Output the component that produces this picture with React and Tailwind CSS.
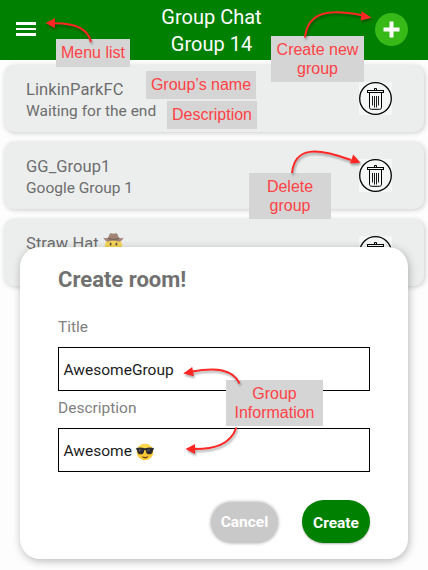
import React from 'react';

const rooms = [
  { name: 'LinkinParkFC', description: 'Waiting for the end' },
  { name: 'GG_Group1', description: 'Google Group 1' },
  { name: 'Straw Hat', description: '', cowboy: true },
];

function TrashIcon() {
  return (
    <svg width="33" height="33" viewBox="0 0 33 33" fill="none" stroke="#000" className="bg-[#f5f6f6]">
      <circle cx="16.5" cy="16.5" r="15.8" strokeWidth="1.3" />
      <path d="M15.500 8V6.500h2V8" strokeWidth="1" />
      <rect x="8.5" y="8.5" width="16" height="2" strokeWidth="1" />
      <path d="M10.500 11v14.200c0 1.400.7 2.100 2 2.100h8c1.300 0 2-.7 2-2.100V11" strokeWidth="1" />
      <path d="M13.500 14v9.500M15.500 14v11.500M17.500 14v11.500M19.500 14v9.500" strokeWidth="0.900" />
    </svg>
  );
}

function CowboyEmoji() {
  return (
    <svg width="21" height="21" viewBox="0 0 21 21">
      <circle cx="10.500" cy="12.500" r="8.600" fill="#f5d657" />
      <ellipse cx="7.600" cy="11" rx="1" ry="1.600" fill="#6b5140" />
      <ellipse cx="13.400" cy="11" rx="1" ry="1.600" fill="#6b5140" />
      <path d="M.3 4.600c2 1 3.500.700 5-.100L6.600.900C7.200-.1 8.600.2 10.500.7c1.900-.5 3.300-.8 3.900.200l1.300 3.600c1.500.8 3 1.100 5 .100-.8 2.300-2.600 3.900-4.700 4.100-3.600-1.300-7.400-1.300-11 0C2.900 8.500 1.100 6.900.3 4.600z" fill="#a28577" />
      <path d="M5.300 4.500c3.200 1.500 7.200 1.500 10.400 0l.5 1.400c-3.600 1.500-7.800 1.500-11.400 0z" fill="#7e655b" />
    </svg>
  );
}

function SunglassesEmoji() {
  return (
    <svg width="18" height="18" viewBox="0 0 18 18">
      <circle cx="9" cy="9" r="8.300" fill="#fcc936" />
      <ellipse cx="9" cy="5" rx="6.500" ry="3.800" fill="#fdd94b" />
      <path d="M.2 5.100c2.800-.8 5.800-.7 8.800.2 3-.9 6-1 8.800-.2l-.1 1.500-.7.600c-.3 3-1.600 4.100-3.800 4.100-2.200 0-3-1.300-3.500-3.900-.2-.5-1.200-.5-1.400 0-.5 2.600-1.300 3.900-3.500 3.900-2.200 0-3.500-1.100-3.800-4.100l-.7-.6z" fill="#2d2d2f" />
      <path d="M3 6.300l3-.1-3.300 3zM11.500 6.300l3-.1-3.300 2.500z" fill="#59595c" />
      <path d="M5.700 13.200c2.200 1.100 4.500 1 6.600-.3-.4 1.400-1.600 2.300-3.300 2.300-1.500 0-2.700-.7-3.300-2z" fill="#5a3d17" />
    </svg>
  );
}

function Label({ className, children }) {
  return (
    <div
      className={`absolute flex flex-col items-center justify-center whitespace-nowrap bg-[#d5d5d5] font-['Liberation_Sans',Arial,sans-serif] text-[16px] leading-[19px] text-[#ff4245] ${className}`}
    >
      {children}
    </div>
  );
}

function Arrows() {
  return (
    <svg
      className="pointer-events-none absolute inset-0 drop-shadow-[1px_2px_1px_rgba(0,0,0,0.35)]"
      width="428"
      height="570"
      viewBox="0 0 428 570"
      fill="none"
      stroke="#ff2724"
      strokeWidth="2"
    >
      <path d="M91 42C88 28 73 23 54 23.200" />
      <path d="M305 37.500C308 10 332 9 363 15.500" />
      <path d="M292 173C295 146 317 148 351 160" />
      <path d="M239.500 383.500C233 369 216 367 192 371.500" />
      <path d="M236.500 427.500C230 445 214 449 195 449" />
      <g fill="#ff2724" stroke="none">
        <path d="M45.500 23l9.500-4.800v10z" />
        <path d="M371.500 17.800l-10-6.800-.8 9.600z" />
        <path d="M360.500 162.800l-7.300-8.200-3.200 9z" />
        <path d="M183.200 373.500l9-6.500 1.600 9.200z" />
        <path d="M185.500 449l9.500-5v10z" />
      </g>
    </svg>
  );
}

function CreateRoomDialog() {
  return (
    <section className="absolute left-[20px] top-[247px] flex h-[312px] w-[388px] flex-col rounded-[20px] bg-white px-[38px] shadow-[1px_2px_8px_rgba(0,0,0,0.28)]">
      <h2 className="mt-[19px] text-[22px] font-bold leading-[28px] text-[#717171]">Create room!</h2>
      <label className="mt-[23px] text-[15.500px] leading-[20px] text-[#808080]">Title</label>
      <div className="mt-[10px] flex h-[44px] items-center border border-black pl-[4.500px] pt-[4px] text-[15.500px] text-[#1c1c1c]">
        AwesomeGroup
      </div>
      <label className="mt-[7px] text-[15.500px] leading-[20px] text-[#808080]">Description</label>
      <div className="mt-[10px] flex h-[44px] items-center gap-[4px] border border-black pl-[4.500px] pt-[4px] text-[15.500px] text-[#1c1c1c]">
        Awesome <SunglassesEmoji />
      </div>
      <div className="mt-[28px] flex justify-end gap-[24px] text-[15.500px] font-bold text-white">
        <button className="mt-[2px] h-[41px] w-[67px] rounded-full bg-[#c9c9c9] pt-[1px] shadow-[0_0_3px_1px_#c9c9c9]">Cancel</button>
        <button className="h-[43px] w-[68px] rounded-full bg-[#008000] pt-[4px] shadow-[0_1px_2px_rgba(0,0,0,0.3)]">Create</button>
      </div>
    </section>
  );
}

export default function App() {
  return (
    <main className="relative h-[570px] w-[428px] overflow-hidden bg-[#fdfdfd] font-[Roboto,sans-serif]">
      <header className="grid h-[60px] grid-cols-[33px_1fr_33px] items-center bg-[#008000] pl-[16px] pr-[20px] text-white">
        <div className="-mt-[2px] flex w-[20px] flex-col gap-[3px]">
          <span className="h-[2.500px] bg-white" />
          <span className="h-[2.500px] bg-white" />
          <span className="h-[2.500px] bg-white" />
        </div>
        <h1 className="pt-[1px] pr-[1px] text-center text-[20px] leading-[27px]">
          Group Chat
          <br />
          Group 14
        </h1>
        <div className="-mt-[2px] flex size-[33px] items-center justify-center rounded-full bg-[#37b918]">
          <svg width="17" height="17" viewBox="0 0 17 17" stroke="#fff" strokeWidth="4">
            <path d="M8.500.5v16M.5 8.500h16" />
          </svg>
        </div>
      </header>
      <div className="flex flex-col gap-[10px] px-[4px] pt-[5px]">
        {rooms.map((room) => (
          <article
            key={room.name}
            className="flex h-[67px] items-center justify-between rounded-[10px] bg-[#eceeed] pl-[22px] pr-[32px] shadow-[1px_1px_5px_rgba(0,0,0,0.2)]"
          >
            <div className="flex h-[67px] flex-col pt-[14px] text-[#6c6d6d]">
              <div className="flex h-[21px] gap-[4px] text-[16.500px] leading-[22px] tracking-[0.080px]">
                {room.name}
                {room.cowboy && <CowboyEmoji />}
              </div>
              <p className="text-[15.500px] leading-[23px]">{room.description}</p>
            </div>
            <TrashIcon />
          </article>
        ))}
      </div>
      <CreateRoomDialog />
      <Label className="left-[56px] top-[39px] h-[28px] w-[74px] pb-[2px]">Menu list</Label>
      <Label className="left-[146px] top-[71px] h-[28px] w-[110px] pb-[2px]">Group’s name</Label>
      <Label className="left-[167px] top-[101px] h-[28px] w-[90px] pb-[2px]">Description</Label>
      <Label className="left-[271px] top-[36px] h-[46px] w-[93px]">
        <span>Create new</span>
        <span>group</span>
      </Label>
      <Label className="left-[249px] top-[173px] h-[46px] w-[82px]">
        <span>Delete</span>
        <span>group</span>
      </Label>
      <Label className="left-[226px] top-[380px] h-[46px] w-[97px]">
        <span>Group</span>
        <span>Information</span>
      </Label>
      <Arrows />
    </main>
  );
}
